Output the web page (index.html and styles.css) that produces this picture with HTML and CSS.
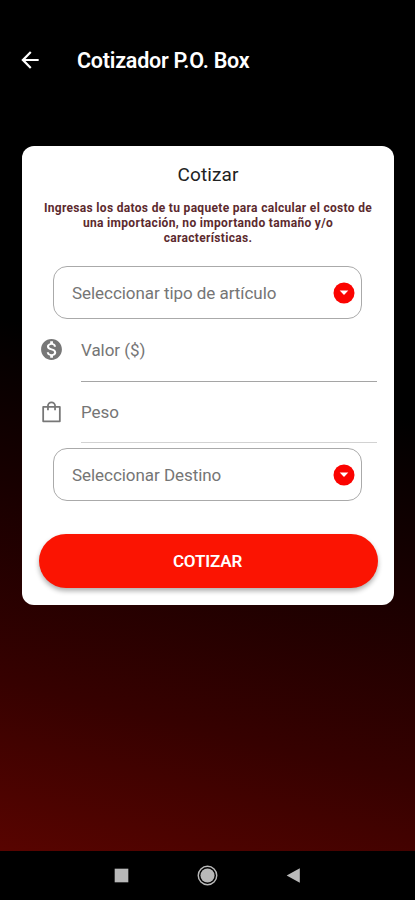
FILE: index.html
```html
<!DOCTYPE html>
<html lang="es">
<head>
    <meta charset="UTF-8">
    <meta name="viewport" content="width=device-width, initial-scale=1.0">
    <title>Cotizador P.O. Box</title>
    <link rel="stylesheet" href="styles.css">
</head>
<body>
    <div class="screen">
        <header class="app-bar">
            <svg class="back" viewBox="0 0 24 24"><path d="M20 11H7.83l5.59-5.59L12 4l-8 8 8 8 1.41-1.41L7.83 13H20v-2z"/></svg>
            <h1><span>Cotizador P.O. Box</span></h1>
        </header>

        <main class="card">
            <h2><span>Cotizar</span></h2>
            <p class="intro">Ingresas los datos de tu paquete para calcular el costo de<br>una importación, no importando tamaño y/o<br>características.</p>

            <div class="select">
                <span>Seleccionar tipo de artículo</span>
                <svg viewBox="0 0 22 22"><circle cx="11" cy="11" r="10.5"/><path d="M6.7 8.6h8.6L11 12.9z"/></svg>
            </div>

            <div class="field">
                <svg viewBox="0 0 24 24"><path d="M12 2C6.48 2 2 6.48 2 12s4.48 10 10 10 10-4.480 10-10S17.520 2 12 2zm1.410 16.090V20h-2.670v-1.930c-1.710-.36-3.160-1.460-3.270-3.400h1.960c.1 1.050.82 1.870 2.650 1.870 1.960 0 2.400-.98 2.400-1.590 0-.83-.44-1.610-2.670-2.140-2.480-.6-4.180-1.620-4.180-3.670 0-1.720 1.390-2.840 3.110-3.210V4h2.670v1.950c1.860.45 2.790 1.860 2.850 3.390H14.300c-.05-1.110-.64-1.870-2.220-1.870-1.500 0-2.400.68-2.400 1.640 0 .84.65 1.390 2.670 1.910s4.180 1.390 4.180 3.910c-.01 1.830-1.380 2.830-3.120 3.160z"/></svg>
                <div class="value">Valor ($)</div>
            </div>

            <div class="field field-light">
                <svg viewBox="0 0 24 24"><path d="M4 6.600h16v13.900H4zM8.600 9.800V5.600a3.400 3.400 0 0 1 6.800 0v4.200" fill="none" stroke="#777" stroke-width="1.700" stroke-linejoin="round"/></svg>
                <div class="value">Peso</div>
            </div>

            <div class="select">
                <span>Seleccionar Destino</span>
                <svg viewBox="0 0 22 22"><circle cx="11" cy="11" r="10.5"/><path d="M6.7 8.6h8.6L11 12.9z"/></svg>
            </div>

            <button class="submit" type="button">COTIZAR</button>
        </main>
    </div>

    <nav class="nav-bar">
        <svg viewBox="0 0 20 20"><path d="M3.500 3.500h13v13h-13z"/></svg>
        <svg viewBox="0 0 20 20"><circle cx="10" cy="10" r="8.800" fill="none" stroke="#b9b9b9" stroke-width="1.400"/><circle cx="10" cy="10" r="6.700"/></svg>
        <svg viewBox="0 0 20 20"><path d="M16 3v14L3.500 10z"/></svg>
    </nav>
</body>
</html>
```
FILE: styles.css
```css
body {
    margin: 0;
    height: 900px;
    display: flex;
    flex-direction: column;
    background-color: #000;
    font-family: Roboto, "Liberation Sans", sans-serif;
}
.screen {
    flex: 1;
    padding: 36px 21px 0 22px;
    background: linear-gradient(194deg, #000 44%, #190000 62%, #360100 82%, #580400 100%);
}
.app-bar { display: flex; align-items: center; height: 48px; margin-bottom: 62px; color: #fff; }
.back { width: 26px; height: 26px; margin-left: -5px; margin-right: 34px; fill: #fff; }
h1 { margin: 0; font-size: 21.5px; font-weight: 600; letter-spacing: -0.22px; white-space: nowrap; }
.card {
    height: 459px;
    padding: 16px 17px 0 17px;
    border-radius: 12px;
    background-color: #fff;
    box-sizing: border-box;
}
h2 { margin: 0; font-size: 19px; line-height: 25px; font-weight: 400; letter-spacing: 0.1px; text-align: center; color: #222; }
.intro {
    margin: 14px 0 20px;
    font-size: 12px;
    line-height: 15px;
    font-weight: 700;
    letter-spacing: 0.32px;
    text-align: center;
    white-space: nowrap;
    color: #5c2a2e;
}
.select {
    display: flex;
    align-items: center;
    justify-content: space-between;
    height: 53px;
    margin: 0 15px 0 14px;
    padding: 0 6px 0 18px;
    border: 1px solid #aaa;
    border-radius: 14px;
    box-sizing: border-box;
    font-size: 17px;
    letter-spacing: -0.05px;
    color: #757575;
}
.select svg { width: 22px; height: 22px; fill: #fb0300; }
.select svg path { fill: #fff; }
.field { display: flex; height: 63px; font-size: 17px; letter-spacing: -0.05px; color: #757575; }
.field svg { width: 25px; height: 25px; margin: 18px 17px 0 0; fill: #777; }
.value { flex: 1; line-height: 62px; border-bottom: 1px solid #a5a5a5; box-sizing: border-box; }
.field-light .value { border-color: #d2d2d2; line-height: 60px; }
.field-light { height: 61px; margin-bottom: 5px; }
.submit {
    display: block;
    width: 339px;
    height: 54px;
    margin-top: 33px;
    padding: 0 8px 0 6px;
    border: none;
    border-radius: 27px;
    background-color: #fb1402;
    box-shadow: 0 3px 5px rgba(0,0,0,0.32);
    font-family: inherit;
    font-size: 17px;
    font-weight: 600;
    letter-spacing: -0.15px;
    color: #fff;
}
.nav-bar { display: flex; justify-content: center; gap: 65px; height: 49px; align-items: center; background-color: #000; }
.nav-bar svg { width: 21px; height: 21px; fill: #b9b9b9; }
```
